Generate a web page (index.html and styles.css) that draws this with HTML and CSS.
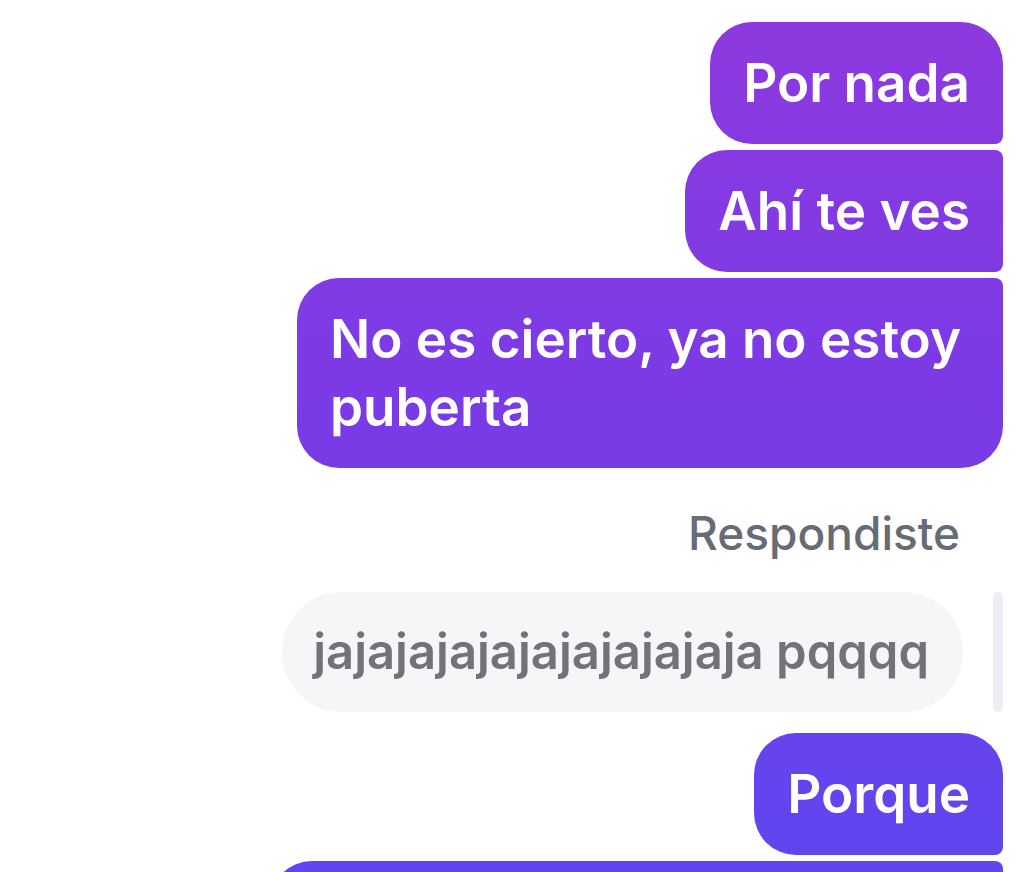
FILE: index.html
```html
<!DOCTYPE html>
<html lang="es">

<head>
    <meta charset="UTF-8">
    <meta name="viewport" content="width=device-width, initial-scale=1.0">
    <title>Chat</title>
    <link rel="stylesheet" href="styles.css">
</head>

<body>
    <div class="thread">
        <div class="bubble first">Por nada</div>
        <div class="bubble middle">Ahí te ves</div>
        <div class="bubble last">No es cierto, ya no estoy puberta</div>

        <div class="reply-label">Respondiste</div>
        <div class="reply-row">
            <div class="reply-quote">jajajajajajajajajajaja pqqqq</div>
            <div class="reply-bar"></div>
        </div>

        <div class="bubble first porque">Porque</div>
        <div class="bubble middle wide">Ya no soy una niña, ya crecí bastante</div>
    </div>
</body>

</html>
```

FILE: styles.css
```css
html,
body {
    margin: 0;
    padding: 0;
    background-color: #fff;
    overflow: hidden;
}

body {
    font-family: "Inter", "Liberation Sans", sans-serif;
    height: 872px;
}

.thread {
    display: flex;
    flex-direction: column;
    align-items: flex-end;
    padding: 22px 21px 0 0;
}

.bubble {
    box-sizing: border-box;
    max-width: 706px;
    padding: 27px 33px;
    margin-bottom: 6px;
    font-size: 53px;
    font-weight: 600;
    line-height: 68px;
    color: #fff;
    border-radius: 42px;
    background: linear-gradient(180deg, #8e39df 0px, #793be6 440px, #5f46f0 872px);
    background-attachment: fixed;
}

.bubble.first {
    border-bottom-right-radius: 8px;
}

.bubble.middle {
    border-top-right-radius: 8px;
    border-bottom-right-radius: 8px;
}

.bubble.last {
    border-top-right-radius: 8px;
    margin-bottom: 0;
}

.bubble.wide {
    max-width: 733px;
}

.reply-label {
    margin: 38px 43px 0 0;
    font-size: 46px;
    font-weight: 500;
    line-height: 54px;
    color: #676b74;
}

.reply-row {
    display: flex;
    align-items: stretch;
    gap: 30px;
    margin-top: 32px;
}

.reply-quote {
    padding: 26px 34px 26px 31px;
    font-size: 49px;
    font-weight: 600;
    line-height: 68px;
    color: #717379;
    background-color: #f5f6f8;
    border-radius: 60px;
}

.reply-bar {
    width: 10px;
    border-radius: 5px;
    background-color: #eceef2;
}

.porque {
    margin-top: 21px;
}
```
